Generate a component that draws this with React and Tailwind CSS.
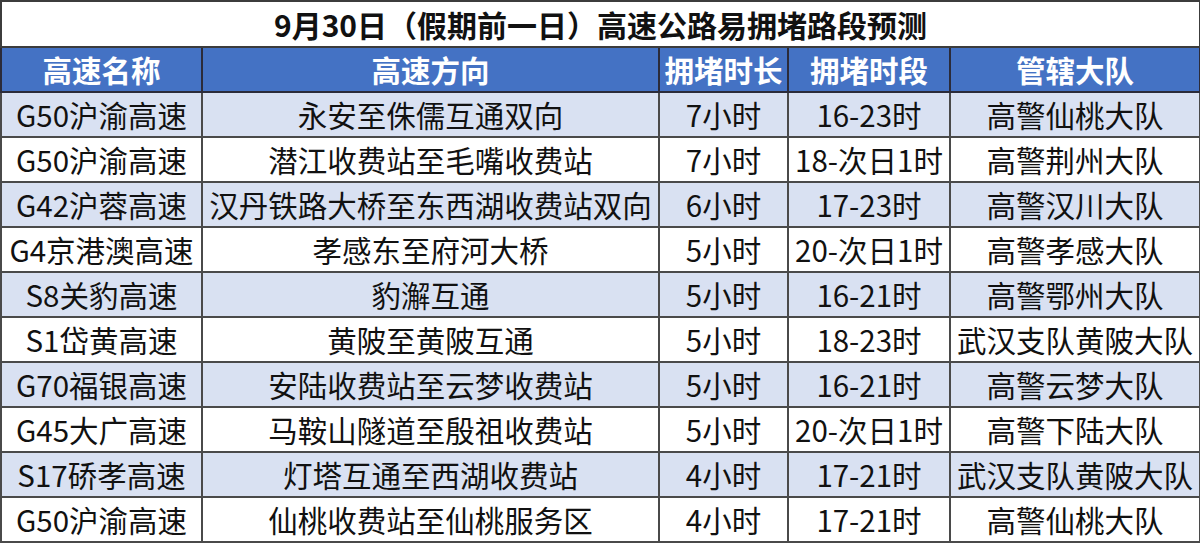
const rows = [
  ["G50沪渝高速", "永安至侏儒互通双向", "7小时", "16-23时", "高警仙桃大队"],
  ["G50沪渝高速", "潜江收费站至毛嘴收费站", "7小时", "18-次日1时", "高警荆州大队"],
  ["G42沪蓉高速", "汉丹铁路大桥至东西湖收费站双向", "6小时", "17-23时", "高警汉川大队"],
  ["G4京港澳高速", "孝感东至府河大桥", "5小时", "20-次日1时", "高警孝感大队"],
  ["S8关豹高速", "豹澥互通", "5小时", "16-21时", "高警鄂州大队"],
  ["S1岱黄高速", "黄陂至黄陂互通", "5小时", "18-23时", "武汉支队黄陂大队"],
  ["G70福银高速", "安陆收费站至云梦收费站", "5小时", "16-21时", "高警云梦大队"],
  ["G45大广高速", "马鞍山隧道至殷祖收费站", "5小时", "20-次日1时", "高警下陆大队"],
  ["S17硚孝高速", "灯塔互通至西湖收费站", "4小时", "17-21时", "武汉支队黄陂大队"],
  ["G50沪渝高速", "仙桃收费站至仙桃服务区", "4小时", "17-21时", "高警仙桃大队"],
];

const headers = ["高速名称", "高速方向", "拥堵时长", "拥堵时段", "管辖大队"];

export default function App() {
  return (
    <div className="w-[1200px] h-[544px] bg-white overflow-hidden">
      <table
        className="table-fixed border-collapse w-[1199px] text-[#111]"
        style={{ fontFamily: '"Noto Sans CJK SC", "Noto Sans", sans-serif' }}
      >
        <colgroup>
          <col className="w-[201px]" />
          <col className="w-[457px]" />
          <col className="w-[129px]" />
          <col className="w-[162px]" />
          <col className="w-[250px]" />
        </colgroup>
        <thead>
          <tr className="h-[46px]">
            <th
              colSpan={5}
              className="border-2 border-[#3c3c3c] bg-white text-[30px] font-bold leading-none text-center whitespace-nowrap"
            >
              9月30日（假期前一日）高速公路易拥堵路段预测
            </th>
          </tr>
          <tr className="h-[45px] bg-[#4472c4]">
            {headers.map((h) => (
              <th
                key={h}
                className="border-2 border-[#2b2b3a] text-white text-[29.5px] font-bold leading-none text-center whitespace-nowrap p-0"
              >
                {h}
              </th>
            ))}
          </tr>
        </thead>
        <tbody>
          {rows.map((r, i) => (
            <tr key={i} className={i % 2 === 0 ? "h-[45px] bg-[#d9e1f2]" : "h-[45px] bg-white"}>
              {r.map((c, j) => (
                <td
                  key={j}
                  className="border-2 border-[#4a4a4a] text-[29.5px] leading-none text-center whitespace-nowrap p-0"
                >
                  {c}
                </td>
              ))}
            </tr>
          ))}
        </tbody>
      </table>
    </div>
  );
}
